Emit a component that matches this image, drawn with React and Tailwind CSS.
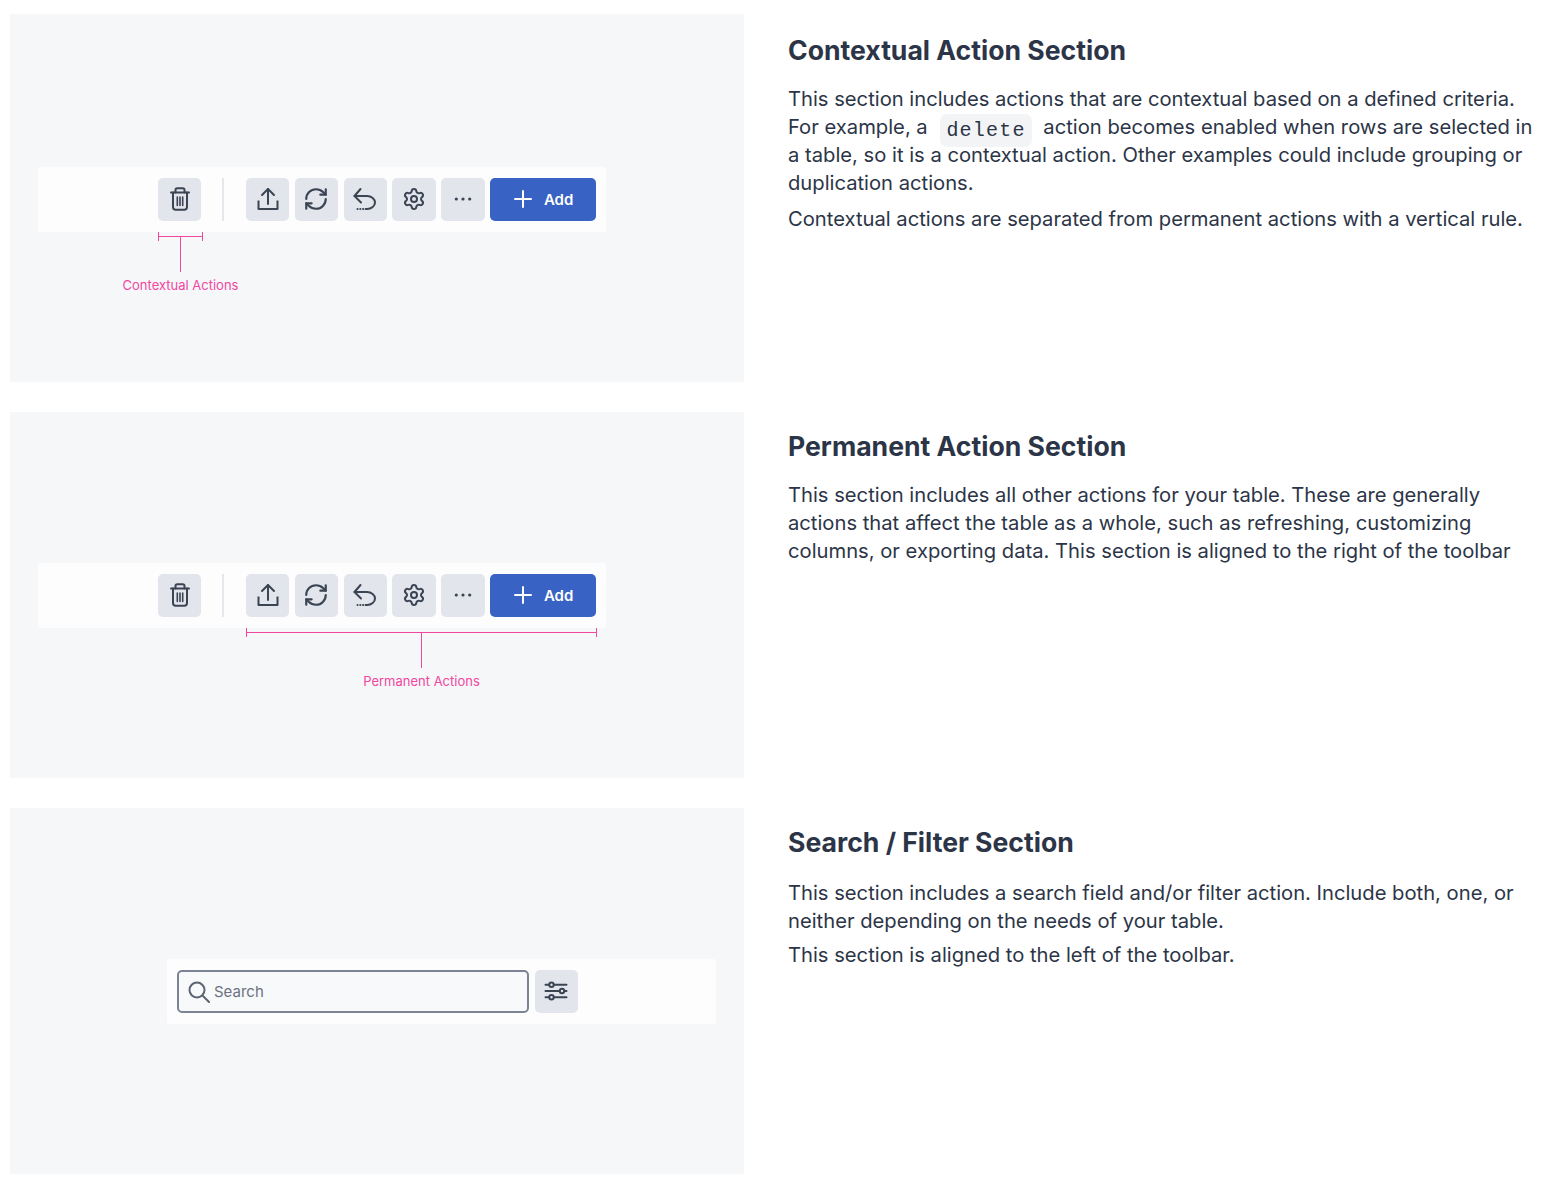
import React from 'react';
import { RefreshCw, Settings } from 'lucide-react';

const IconButton = ({ children }) => (
    <div className="w-[43.4px] h-[43.4px] rounded-[5px] bg-[#e2e5ec] flex items-center justify-center text-[#3b4453] shrink-0">
        {children}
    </div>
);

const iconProps = {
    width: 24,
    height: 24,
    viewBox: '0 0 24 24',
    fill: 'none',
    stroke: 'currentColor',
    strokeWidth: 2,
    strokeLinecap: 'round',
    strokeLinejoin: 'round',
};

const Trash = () => (
    <svg {...iconProps}>
        <path d="M3 5.500h18" />
        <path d="M7.500 5.500V3c0-1 .8-1.800 1.800-1.800h5.400c1 0 1.800.8 1.800 1.800v2.500" />
        <path d="M5 5.500v14.500c0 1.500 1.200 2.700 2.700 2.700h8.600c1.500 0 2.700-1.200 2.700-2.700V5.500" />
        <path d="M9.300 10v8.500M12 10v8.500M14.700 10v8.500" strokeWidth="1.600" />
    </svg>
);

const Upload = () => (
    <svg {...iconProps}>
        <path d="M12 17V2" />
        <path d="M6 8l6-6 6 6" />
        <path d="M2.500 13.500v8.500h19v-8.500" strokeLinecap="butt" />
    </svg>
);

const Undo = () => (
    <svg {...iconProps}>
        <path d="M7.500 2L1.500 9l6.500 6.500" />
        <path d="M1.500 9H14c4.500 0 8 3 8 6.500S18.500 22 14 22h-1.500" />
        <path d="M4.500 22h.1M7.300 22h.1M10 22h.1" />
    </svg>
);

const Dots = () => (
    <svg width="24" height="24" viewBox="0 0 24 24" fill="currentColor">
        <circle cx="5.300" cy="12" r="1.600" />
        <circle cx="12" cy="12" r="1.600" />
        <circle cx="18.700" cy="12" r="1.600" />
    </svg>
);

const Plus = () => (
    <svg width="18" height="18" viewBox="0 0 18 18" fill="none" stroke="white" strokeWidth="2" strokeLinecap="round">
        <path d="M9 1v16M1 9h16" />
    </svg>
);

const SearchIcon = () => (
    <svg width="22" height="22" viewBox="0 0 22 22" fill="none" stroke="#5b6472" strokeWidth="2" strokeLinecap="round">
        <circle cx="9" cy="9" r="7.500" />
        <path d="M15 15l6 6" />
    </svg>
);

const Sliders = () => (
    <svg width="24" height="24" viewBox="0 0 24 24" fill="none" stroke="currentColor" strokeWidth="2" strokeLinecap="round">
        <path d="M1.500 5.700h3.500M10 5.700h12.500M1.500 12h14M20.500 12h2M1.500 18.300h3.500M10 18.300h12.500" />
        <circle cx="7.500" cy="5.700" r="2.200" />
        <circle cx="18" cy="12" r="2.200" />
        <circle cx="7.500" cy="18.300" r="2.200" />
    </svg>
);

const Toolbar = () => (
    <div className="w-[568px] h-[65px] bg-[#fdfdfe] rounded-[3px] flex items-center">
        <div className="ml-[120px]">
            <IconButton><Trash /></IconButton>
        </div>
        <div className="w-[2px] h-[43px] bg-[#e5e7ec] ml-[20.600px] mr-[22px]"></div>
        <div className="flex gap-[5.400px]">
            <IconButton><Upload /></IconButton>
            <IconButton><RefreshCw size={26} strokeWidth={2} /></IconButton>
            <IconButton><Undo /></IconButton>
            <IconButton><Settings size={24} strokeWidth={2} /></IconButton>
            <IconButton><Dots /></IconButton>
            <div className="w-[105.700px] h-[43.400px] rounded-[5px] bg-[#3862c3] flex items-center pl-[24px] gap-[12px] text-white text-[15px] font-semibold">
                <Plus />
                <span className="mt-[1px]">Add</span>
            </div>
        </div>
    </div>
);

// bracket under the toolbar with a stem and a pink label
const Bracket = ({ className, label }) => (
    <div className={`flex flex-col ${className}`}>
        <div className="h-[9px] border-x-[1.500px] border-[#f1489f] flex items-center">
            <div className="h-[1.500px] w-full bg-[#f1489f]"></div>
        </div>
        <div className="flex justify-center">
            <div className="w-[1.500px] h-[35.500px] mt-[-4.500px] mb-[4px] bg-[#f1489f]"></div>
        </div>
        <div className="flex justify-center">
            <div className="text-[13px] leading-[18px] text-[#f1489f] whitespace-nowrap">{label}</div>
        </div>
    </div>
);

const Section = ({ title, children, panel, panelClass, textClass, bodyClass }) => (
    <div className="flex">
        <div className={`w-[734px] bg-[#f6f7f9] ${panelClass}`}>{panel}</div>
        <div className={`ml-[44px] w-[752px] ${textClass}`}>
            <h2 className="text-[26.600px] leading-[36px] font-bold text-[#2c3547]">{title}</h2>
            <div className={`text-[20.200px] leading-[28px] text-[#2c3547] ${bodyClass}`}>{children}</div>
        </div>
    </div>
);

export default function App() {
    return (
        <div className="w-[1566px] h-[1188px] bg-white pl-[10px] pt-[14px] font-['Inter',sans-serif] overflow-hidden flex flex-col gap-[30px]">
            <Section
                title="Contextual Action Section"
                panelClass="h-[368px] pt-[153px] pl-[28px]"
                textClass="pt-[17.500px]"
                bodyClass="mt-[17px] space-y-[8px]"
                panel={
                    <>
                        <Toolbar />
                        <Bracket className="ml-[120px] w-[45px]" label="Contextual Actions" />
                    </>
                }
            >
                <p>
                    This section includes actions that are contextual based on a defined criteria.<br />
                    For example, a{' '}
                    <code className="ml-[7px] mr-[6px] px-[6px] py-[5px] leading-none align-[-2px] rounded-[7px] bg-[#f3f4f6] font-['Liberation_Mono',monospace] text-[20px] tracking-[1.200px]">delete</code>
                    {' '}action becomes enabled when rows are selected in<br />
                    a table, so it is a contextual action. Other examples could include grouping or<br />
                    duplication actions.
                </p>
                <p>Contextual actions are separated from permanent actions with a vertical rule.</p>
            </Section>

            <Section
                title="Permanent Action Section"
                panelClass="h-[366px] pt-[151px] pl-[28px]"
                textClass="pt-[16px]"
                bodyClass="mt-[17px]"
                panel={
                    <>
                        <Toolbar />
                        <Bracket className="ml-[208px] w-[351px]" label="Permanent Actions" />
                    </>
                }
            >
                <p>
                    This section includes all other actions for your table. These are generally<br />
                    actions that affect the table as a whole, such as refreshing, customizing<br />
                    columns, or exporting data. This section is aligned to the right of the toolbar
                </p>
            </Section>

            <Section
                title="Search / Filter Section"
                panelClass="h-[366px] pt-[151px] pl-[157px]"
                textClass="pt-[16px]"
                bodyClass="mt-[19px] space-y-[6px]"
                panel={
                    <div className="w-[549px] h-[65px] bg-[#fdfdfe] rounded-[3px] flex items-center pl-[10px] gap-[6px]">
                        <div className="w-[351.500px] h-[43px] rounded-[5px] border-[2px] border-[#7b8494] bg-[#f8f9fb] flex items-center pl-[9px] gap-[4px]">
                            <SearchIcon />
                            <span className="text-[15px] mt-[1px] text-[#6b7280]">Search</span>
                        </div>
                        <IconButton><Sliders /></IconButton>
                    </div>
                }
            >
                <p>
                    This section includes a search field and/or filter action. Include both, one, or<br />
                    neither depending on the needs of your table.
                </p>
                <p>This section is aligned to the left of the toolbar.</p>
            </Section>
        </div>
    );
}
